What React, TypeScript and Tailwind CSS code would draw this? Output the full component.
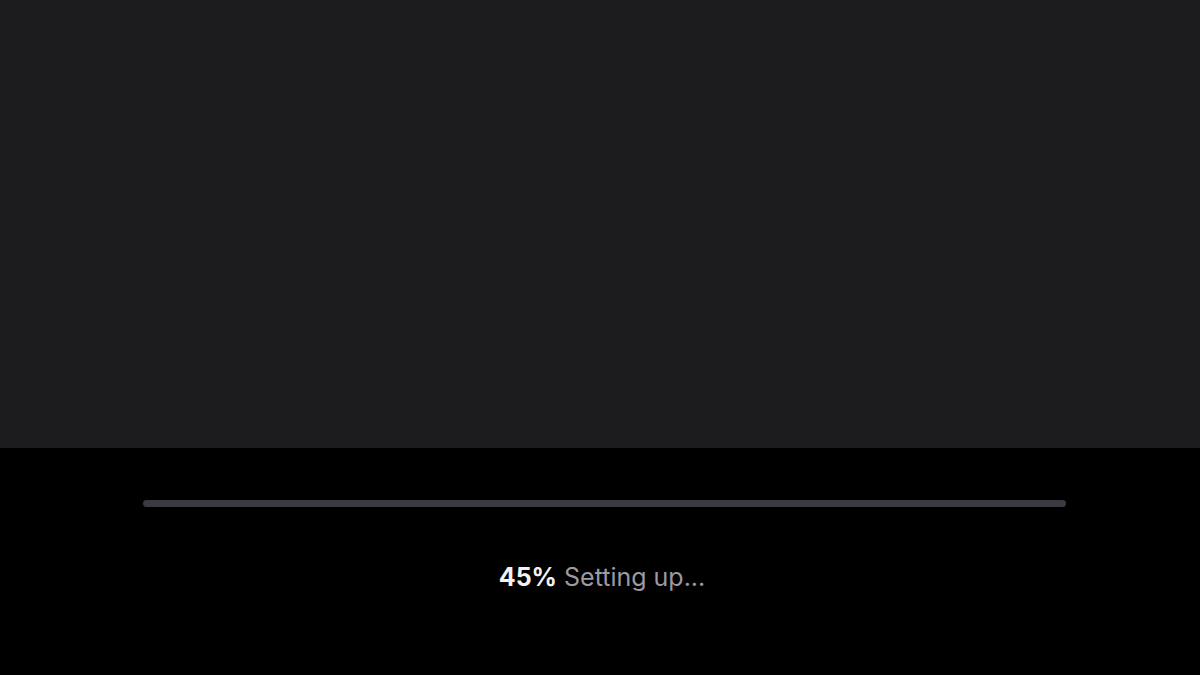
export default function App() {
  return (
    <div className="w-[1200px] h-[675px] flex flex-col bg-black" style={{ fontFamily: 'Inter, "Noto Sans", sans-serif' }}>
      <div className="h-[448px] bg-[#1c1c1e]" />
      <div className="flex-1 flex flex-col items-center">
        <div className="mt-[52px] ml-[8px] w-[923px] h-[7px] rounded-full bg-[#3a3a40]" />
        <div className="mt-[55px] ml-[4px] text-[25px] leading-[30px]">
          <span className="font-bold text-[#f2f2f2]">45%</span>
          <span className="text-[#9a9aa0]"> Setting up...</span>
        </div>
      </div>
    </div>
  );
}
